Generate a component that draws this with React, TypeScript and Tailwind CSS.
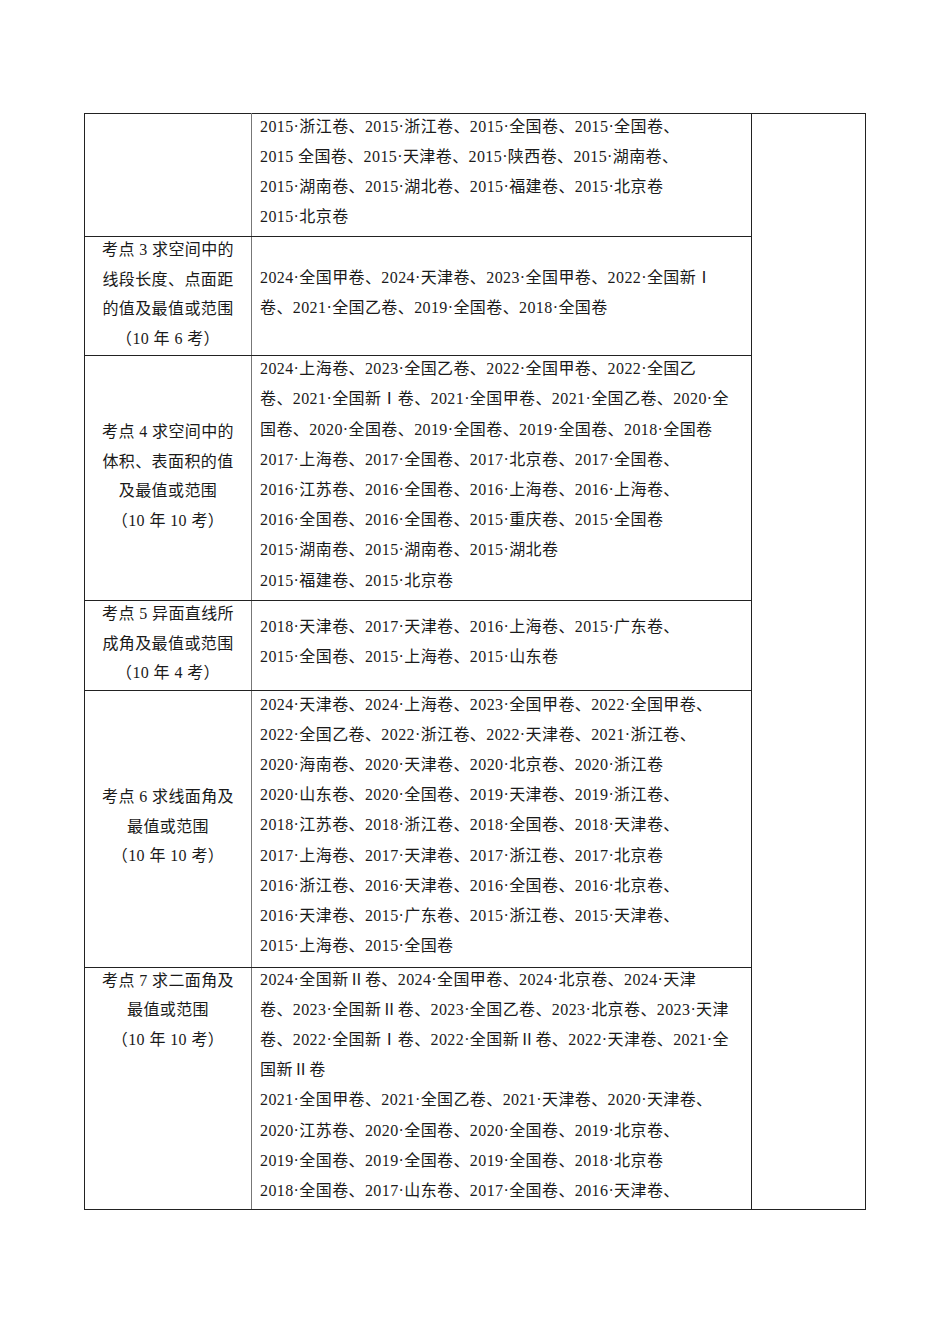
import React from 'react';

type Row = {
  h: string;
  label: string[];
  lines: string[];
  labelTop?: boolean;
};

const rows: Row[] = [
  {
    h: 'h-[123px]',
    label: [],
    lines: [
      '2015·浙江卷、2015·浙江卷、2015·全国卷、2015·全国卷、',
      '2015 全国卷、2015·天津卷、2015·陕西卷、2015·湖南卷、',
      '2015·湖南卷、2015·湖北卷、2015·福建卷、2015·北京卷',
      '2015·北京卷',
    ],
  },
  {
    h: 'h-[119px]',
    label: ['考点 3 求空间中的', '线段长度、点面距', '的值及最值或范围', '（10 年 6 考）'],
    lines: [
      '2024·全国甲卷、2024·天津卷、2023·全国甲卷、2022·全国新Ⅰ',
      '卷、2021·全国乙卷、2019·全国卷、2018·全国卷',
    ],
  },
  {
    h: 'h-[245px]',
    label: ['考点 4 求空间中的', '体积、表面积的值', '及最值或范围', '（10 年 10 考）'],
    lines: [
      '2024·上海卷、2023·全国乙卷、2022·全国甲卷、2022·全国乙',
      '卷、2021·全国新Ⅰ卷、2021·全国甲卷、2021·全国乙卷、2020·全',
      '国卷、2020·全国卷、2019·全国卷、2019·全国卷、2018·全国卷',
      '2017·上海卷、2017·全国卷、2017·北京卷、2017·全国卷、',
      '2016·江苏卷、2016·全国卷、2016·上海卷、2016·上海卷、',
      '2016·全国卷、2016·全国卷、2015·重庆卷、2015·全国卷',
      '2015·湖南卷、2015·湖南卷、2015·湖北卷',
      '2015·福建卷、2015·北京卷',
    ],
  },
  {
    h: 'h-[89px]',
    label: ['考点 5 异面直线所', '成角及最值或范围', '（10 年 4 考）'],
    lines: [
      '2018·天津卷、2017·天津卷、2016·上海卷、2015·广东卷、',
      '2015·全国卷、2015·上海卷、2015·山东卷',
    ],
  },
  {
    h: 'h-[277px]',
    label: ['考点 6 求线面角及', '最值或范围', '（10 年 10 考）'],
    lines: [
      '2024·天津卷、2024·上海卷、2023·全国甲卷、2022·全国甲卷、',
      '2022·全国乙卷、2022·浙江卷、2022·天津卷、2021·浙江卷、',
      '2020·海南卷、2020·天津卷、2020·北京卷、2020·浙江卷',
      '2020·山东卷、2020·全国卷、2019·天津卷、2019·浙江卷、',
      '2018·江苏卷、2018·浙江卷、2018·全国卷、2018·天津卷、',
      '2017·上海卷、2017·天津卷、2017·浙江卷、2017·北京卷',
      '2016·浙江卷、2016·天津卷、2016·全国卷、2016·北京卷、',
      '2016·天津卷、2015·广东卷、2015·浙江卷、2015·天津卷、',
      '2015·上海卷、2015·全国卷',
    ],
  },
  {
    h: 'h-[242px]',
    labelTop: true,
    label: ['考点 7 求二面角及', '最值或范围', '（10 年 10 考）'],
    lines: [
      '2024·全国新Ⅱ卷、2024·全国甲卷、2024·北京卷、2024·天津',
      '卷、2023·全国新Ⅱ卷、2023·全国乙卷、2023·北京卷、2023·天津',
      '卷、2022·全国新Ⅰ卷、2022·全国新Ⅱ卷、2022·天津卷、2021·全',
      '国新Ⅱ卷',
      '2021·全国甲卷、2021·全国乙卷、2021·天津卷、2020·天津卷、',
      '2020·江苏卷、2020·全国卷、2020·全国卷、2019·北京卷、',
      '2019·全国卷、2019·全国卷、2019·全国卷、2018·北京卷',
      '2018·全国卷、2017·山东卷、2017·全国卷、2016·天津卷、',
    ],
  },
];

export default function App() {
  return (
    <div className="min-h-[1344px] w-[950px] bg-white pt-[113px] pl-[84px] font-['Liberation_Serif','Noto_Sans_CJK_SC',serif] text-[16px] tracking-[0.4px] text-[#1a1a1a]">
      <table className="table-fixed border-collapse">
        <colgroup>
          <col className="w-[167px]" />
          <col className="w-[500px]" />
          <col className="w-[114px]" />
        </colgroup>
        <tbody>
          {rows.map((r, i) => (
            <tr key={i} className={r.h}>
              <td className={`border border-[#222] border-r-[#777] p-0 text-center leading-[29.5px] ${r.labelTop ? 'align-top' : 'align-middle'}`}>
                <div className="-translate-y-[2px]">
                  {r.label.map((l, j) => (
                    <div key={j} className="whitespace-nowrap">{l}</div>
                  ))}
                </div>
              </td>
              <td className="border border-[#222] px-[8px] py-0 align-middle leading-[30.2px]">
                <div className="-translate-y-[3px]">
                  {r.lines.map((l, j) => (
                    <div key={j} className="whitespace-nowrap">{l}</div>
                  ))}
                </div>
              </td>
              {i === 0 && <td rowSpan={rows.length} className="border border-[#222] p-0" />}
            </tr>
          ))}
        </tbody>
      </table>
    </div>
  );
}
